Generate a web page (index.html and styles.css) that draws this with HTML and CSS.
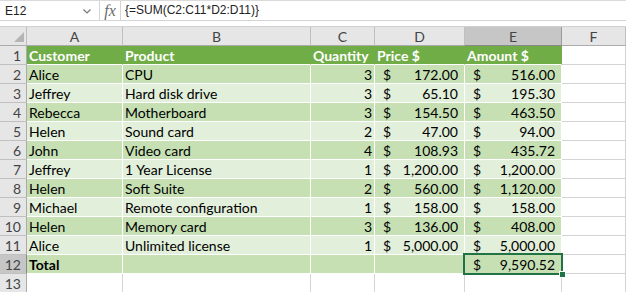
FILE: index.html
```html
<!DOCTYPE html>
<html lang="en">
<head>
  <meta charset="UTF-8">
  <title>Sales - Array formula</title>
  <link rel="stylesheet" href="styles.css">
</head>
<body>
  <div class="formula-bar">
    <div class="name-box">
      <span>E12</span>
      <svg class="chevron" width="8" height="5" viewBox="0 0 8 5"><polyline points="0.5,0.5 4,4 7.5,0.5" fill="none" stroke="#777" stroke-width="1.2"/></svg>
    </div>
    <div class="fx">fx</div>
    <div class="formula">{=SUM(C2:C11*D2:D11)}</div>
  </div>
  <div class="spacer"></div>

  <div class="sheet">
    <div class="hd corner"><span class="tri"></span></div>
    <div class="hd">A</div>
    <div class="hd">B</div>
    <div class="hd">C</div>
    <div class="hd">D</div>
    <div class="hd hd-sel">E</div>
    <div class="hd">F</div>

    <div class="rh">1</div>
    <div class="c th">Customer</div>
    <div class="c th">Product</div>
    <div class="c th">Quantity</div>
    <div class="c th">Price $</div>
    <div class="c th">Amount $</div>
    <div class="c"></div>

    <div class="rh">2</div>
    <div class="c dk">Alice</div>
    <div class="c dk">CPU</div>
    <div class="c dk num">3</div>
    <div class="c dk cur"><span>$</span><span>172.00</span></div>
    <div class="c dk cur"><span>$</span><span>516.00</span></div>
    <div class="c"></div>

    <div class="rh">3</div>
    <div class="c lt">Jeffrey</div>
    <div class="c lt">Hard disk drive</div>
    <div class="c lt num">3</div>
    <div class="c lt cur"><span>$</span><span>65.10</span></div>
    <div class="c lt cur"><span>$</span><span>195.30</span></div>
    <div class="c"></div>

    <div class="rh">4</div>
    <div class="c dk">Rebecca</div>
    <div class="c dk">Motherboard</div>
    <div class="c dk num">3</div>
    <div class="c dk cur"><span>$</span><span>154.50</span></div>
    <div class="c dk cur"><span>$</span><span>463.50</span></div>
    <div class="c"></div>

    <div class="rh">5</div>
    <div class="c lt">Helen</div>
    <div class="c lt">Sound card</div>
    <div class="c lt num">2</div>
    <div class="c lt cur"><span>$</span><span>47.00</span></div>
    <div class="c lt cur"><span>$</span><span>94.00</span></div>
    <div class="c"></div>

    <div class="rh">6</div>
    <div class="c dk">John</div>
    <div class="c dk">Video card</div>
    <div class="c dk num">4</div>
    <div class="c dk cur"><span>$</span><span>108.93</span></div>
    <div class="c dk cur"><span>$</span><span>435.72</span></div>
    <div class="c"></div>

    <div class="rh">7</div>
    <div class="c lt">Jeffrey</div>
    <div class="c lt">1 Year License</div>
    <div class="c lt num">1</div>
    <div class="c lt cur"><span>$</span><span>1,200.00</span></div>
    <div class="c lt cur"><span>$</span><span>1,200.00</span></div>
    <div class="c"></div>

    <div class="rh">8</div>
    <div class="c dk">Helen</div>
    <div class="c dk">Soft Suite</div>
    <div class="c dk num">2</div>
    <div class="c dk cur"><span>$</span><span>560.00</span></div>
    <div class="c dk cur"><span>$</span><span>1,120.00</span></div>
    <div class="c"></div>

    <div class="rh">9</div>
    <div class="c lt">Michael</div>
    <div class="c lt">Remote configuration</div>
    <div class="c lt num">1</div>
    <div class="c lt cur"><span>$</span><span>158.00</span></div>
    <div class="c lt cur"><span>$</span><span>158.00</span></div>
    <div class="c"></div>

    <div class="rh">10</div>
    <div class="c dk">Helen</div>
    <div class="c dk">Memory card</div>
    <div class="c dk num">3</div>
    <div class="c dk cur"><span>$</span><span>136.00</span></div>
    <div class="c dk cur"><span>$</span><span>408.00</span></div>
    <div class="c"></div>

    <div class="rh">11</div>
    <div class="c lt">Alice</div>
    <div class="c lt">Unlimited license</div>
    <div class="c lt num">1</div>
    <div class="c lt cur"><span>$</span><span>5,000.00</span></div>
    <div class="c lt cur"><span>$</span><span>5,000.00</span></div>
    <div class="c"></div>

    <div class="rh rh-sel">12</div>
    <div class="c dk total">Total</div>
    <div class="c dk"></div>
    <div class="c dk"></div>
    <div class="c dk"></div>
    <div class="c dk cur active"><span>$</span><span>9,590.52</span></div>
    <div class="c"></div>

    <div class="rh">13</div>
    <div class="c"></div>
    <div class="c"></div>
    <div class="c"></div>
    <div class="c"></div>
    <div class="c"></div>
    <div class="c"></div>
  </div>
</body>
</html>
```

FILE: styles.css
```css
body {
  margin: 0;
  background: #fff;
  font-family: 'Lato', 'Liberation Sans', sans-serif;
  overflow: hidden;
}

/* formula bar */
.formula-bar {
  display: flex;
  height: 19px;
  border-top: 1px solid #dadada;
  border-bottom: 1px solid #d4d4d4;
  font-family: 'Liberation Sans', sans-serif;
  font-size: 12px;
  color: #222;
}
.name-box {
  width: 100px;
  display: flex;
  align-items: center;
  justify-content: space-between;
  padding: 0 8px 0 5px;
  box-sizing: border-box;
  border-right: 1px solid #d4d4d4;
}
.chevron { margin-top: 1px; }
.fx {
  width: 20px;
  border-right: 1px solid #d4d4d4;
  font-family: 'Liberation Serif', serif;
  font-style: italic;
  font-size: 16px;
  color: #6a6a6a;
  text-align: center;
  line-height: 19px;
}
.formula {
  padding-left: 4px;
  line-height: 19px;
}
.spacer {
  height: 5px;
  border-bottom: 1px solid #d0d0d0;
}

/* grid */
.sheet {
  display: grid;
  grid-template-columns: 27px 96px 188px 64px 90px 97px 1fr;
  grid-auto-rows: 19px;
  font-size: 14px;
}
.sheet > div {
  box-sizing: border-box;
  border-right: 1px solid #d4d4d4;
  border-bottom: 1px solid #d4d4d4;
  line-height: 19px;
  white-space: nowrap;
  overflow: hidden;
}

.hd {
  background: #e6e6e6;
  color: #444;
  text-align: center;
  border-color: #c0c0c0 !important;
  border-bottom-color: #ababab !important;
}
.hd-sel {
  background: #c6c6c6;
  border-left: 1px solid #9b9b9b;
  border-right-color: #9b9b9b !important;
  border-bottom-color: #8a8a8a !important;
  margin-left: -1px;
}
.corner { position: relative; }
.tri {
  position: absolute;
  right: 2px;
  bottom: 3px;
  width: 0;
  height: 0;
  border-left: 10px solid transparent;
  border-bottom: 10px solid #b4b4b4;
}

.rh {
  background: #e6e6e6;
  color: #444;
  text-align: right;
  padding-right: 5px;
  border-color: #c0c0c0 !important;
  border-right-color: #ababab !important;
}
.rh-sel {
  background: #c6c6c6;
  border-right-color: #8a8a8a !important;
  border-top: 1px solid #9b9b9b;
  margin-top: -1px;
}

.c {
  padding: 0 2px;
  color: #000;
}
.th {
  background: #70ad47;
  color: #fff;
  font-weight: bold;
  border-right-color: #70ad47 !important;
  border-bottom-color: #fff !important;
}
.dk {
  background: #c6e0b4;
  border-color: #fff !important;
}
.lt {
  background: #e2efda;
  border-color: #fff !important;
}
.num { text-align: right; }
.cur {
  display: flex;
  justify-content: space-between;
  padding: 0 6px 0 8px;
}
.total { font-weight: bold; }

.active {
  position: relative;
  overflow: visible !important;
}
.active::after {
  content: "";
  position: absolute;
  left: -2px;
  top: -2px;
  right: -2px;
  bottom: -2px;
  border: 2px solid #217346;
}
.active::before {
  content: "";
  position: absolute;
  right: -5px;
  bottom: -5px;
  width: 5px;
  height: 5px;
  background: #217346;
  border: 1px solid #fff;
  z-index: 1;
}
```
